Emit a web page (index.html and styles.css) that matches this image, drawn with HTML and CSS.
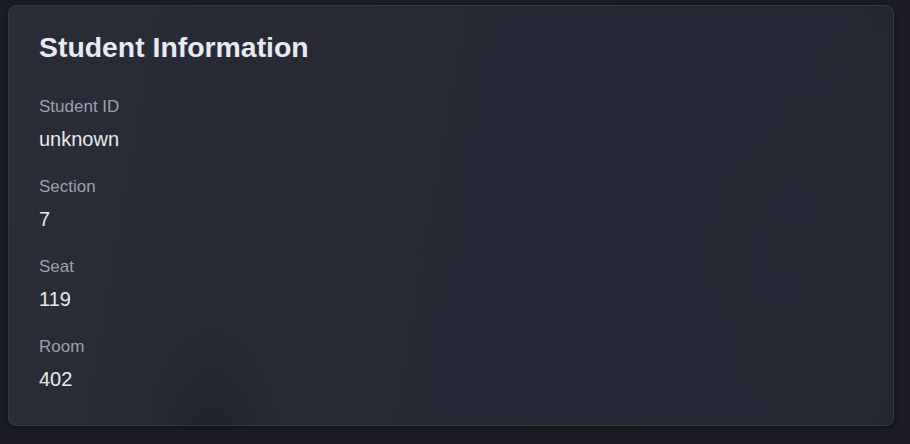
FILE: index.html
```html
<!DOCTYPE html>
<html lang="en">
<head>
<meta charset="utf-8">
<title>Student Information</title>
<link rel="stylesheet" href="styles.css">
</head>
<body>
  <section class="card">
    <h1 class="card-title">Student Information</h1>
    <dl class="info-list">
      <div class="info-item">
        <dt class="info-label">Student ID</dt>
        <dd class="info-value">unknown</dd>
      </div>
      <div class="info-item">
        <dt class="info-label">Section</dt>
        <dd class="info-value">7</dd>
      </div>
      <div class="info-item">
        <dt class="info-label">Seat</dt>
        <dd class="info-value">119</dd>
      </div>
      <div class="info-item">
        <dt class="info-label">Room</dt>
        <dd class="info-value">402</dd>
      </div>
    </dl>
  </section>
</body>
</html>
```
FILE: styles.css
```css
html, body {
  margin: 0;
  height: 100%;
}
body {
  background: #1b1c24;
  font-family: "Liberation Sans", Arial, sans-serif;
  padding: 5px 16px 0 8px;
  box-sizing: border-box;
  overflow: hidden;
}
.card {
  border: 1px solid #353846;
  border-radius: 8px;
  background:
    radial-gradient(ellipse 80px 150px at 200px 450px, rgba(20,21,28,0.45), rgba(20,21,28,0) 100%),
    radial-gradient(ellipse 260px 300px at 780px 240px, rgba(40,43,54,0.6), rgba(40,43,54,0) 100%),
    linear-gradient(100deg, #2a2c37 0%, #272a35 40%, #252834 70%, #232531 100%);
  padding: 24px 30px 34px;
  box-shadow: 0 2px 6px rgba(0,0,0,0.35);
}
.card-title {
  margin: 0;
  font-size: 28.4px;
  line-height: 34px;
  font-weight: 700;
  color: #e6ebf3;
}
.info-list {
  margin: 33px 0 0;
  display: flex;
  flex-direction: column;
  gap: 26px;
}
.info-item {
  display: flex;
  flex-direction: column;
  gap: 10px;
}
.info-label {
  font-size: 17px;
  line-height: 20px;
  color: #9ba1ae;
}
.info-value {
  margin: 0;
  font-size: 20px;
  line-height: 24px;
  color: #e7e9ee;
}
```
